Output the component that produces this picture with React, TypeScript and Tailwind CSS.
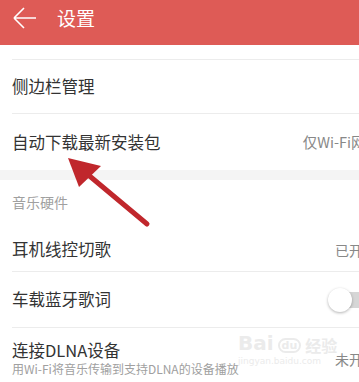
import { ReactNode } from 'react';

const font = { fontFamily: '"Noto Sans CJK SC", "Noto Sans", sans-serif' };

function Row({
  title,
  right,
  border = true,
  className = '',
}: {
  title: ReactNode;
  right?: ReactNode;
  border?: boolean;
  className?: string;
}) {
  return (
    <div className={`flex pl-[12px] ${className}`}>
      <div
        className={`flex flex-1 items-center justify-between ${
          border ? 'border-b border-[#ececec]' : ''
        }`}
      >
        <div className="text-[16.5px] text-[#333] leading-none">{title}</div>
        {right}
      </div>
    </div>
  );
}

function Toggle() {
  return (
    <div className="relative h-[24px] w-[40px] -mr-[9px]">
      <div className="absolute left-[10px] top-[4px] h-[16px] w-[40px] rounded-full bg-[#d6d6d6]" />
      <div className="absolute left-0 top-0 h-[24px] w-[24px] rounded-full bg-white shadow-[0_1px_3px_rgba(0,0,0,0.3)]" />
    </div>
  );
}

export default function App() {
  return (
    <div className="relative h-[382px] w-[359px] overflow-hidden bg-white" style={font}>
      {/* header */}
      <div className="flex h-[45px] items-center bg-[#de5b56] pb-[10px]">
        <svg className="ml-[13px]" width="24" height="22" viewBox="0 0 24 22">
          <path d="M1 11 H23 M1 11 L11 1 M1 11 L11 21" stroke="white" strokeWidth="1.6" fill="none" />
        </svg>
        <span className="ml-[20px] text-[19px] text-white leading-none">设置</span>
      </div>

      <Row title="" className="h-[15px]" />
      <Row title="侧边栏管理" className="h-[54px]" />
      <Row
        title="自动下载最新安装包"
        border={false}
        className="h-[56px]"
        right={<span className="-mr-[21px] text-[14.5px] text-[#888] leading-none">仅Wi-Fi网络</span>}
      />
      <div className="h-[10px] bg-[#f4f4f4]" />

      <div className="flex h-[44px] items-center pl-[12px] text-[14px] text-[#a0a0a0]">音乐硬件</div>

      <Row
        title="耳机线控切歌"
        className="h-[48px] pt-[4px]"
        right={<span className="-mr-[18px] text-[14px] text-[#888] leading-none">已开启</span>}
      />
      <Row title="车载蓝牙歌词" className="h-[56px]" right={<Toggle />} />
      <div className="flex pl-[12px] pt-[13px]">
        <div className="flex flex-1 items-center justify-between">
          <div>
            <div className="text-[16.5px] text-[#333] leading-[18px]">连接DLNA设备</div>
            <div className="mt-[3px] text-[12px] text-[#a0a0a0] leading-[14px]">
              用Wi-Fi将音乐传输到支持DLNA的设备播放
            </div>
          </div>
          <span className="-mr-[18px] text-[14px] text-[#888] leading-none">未开启</span>
        </div>
      </div>

      {/* watermark */}
      <div className="pointer-events-none absolute left-[238px] top-[333px] text-[#ebebeb]">
        <div className="flex items-end gap-[4px] text-[20px] font-bold leading-none" style={{ fontFamily: '"DejaVu Sans", sans-serif' }}>
          <span>Bai</span>
          <span className="rounded-full border-2 border-[#ebebeb] px-[2px] text-[11px]">du</span>
          <span className="text-[16px]" style={font}>经验</span>
        </div>
        <div className="mt-[4px] text-[9px] leading-none" style={{ fontFamily: '"DejaVu Sans", sans-serif' }}>
          jingyan.baidu.com
        </div>
      </div>

      {/* red arrow */}
      <svg className="pointer-events-none absolute left-0 top-0" width="359" height="382">
        <line x1="147" y1="224" x2="80" y2="168" stroke="#c0272c" strokeWidth="5" strokeLinecap="round" />
        <polygon points="68,158 101,166 79,187" fill="#c0272c" />
      </svg>
    </div>
  );
}
